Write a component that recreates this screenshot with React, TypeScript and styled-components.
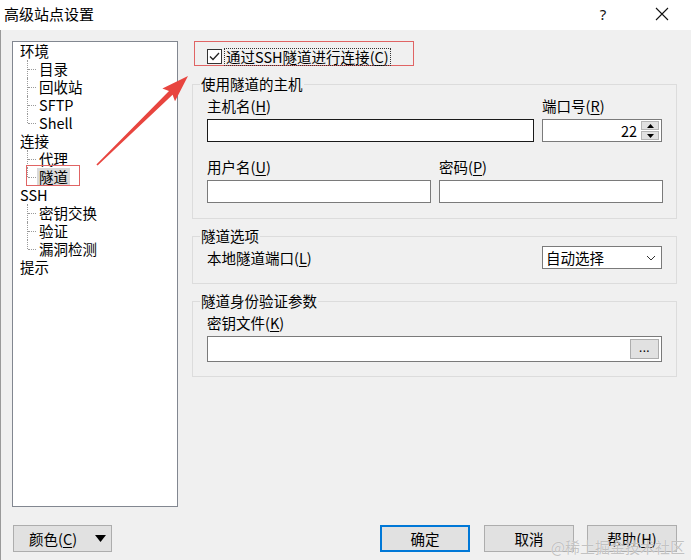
import React from "react";
import styled, { createGlobalStyle } from "styled-components";

const GlobalStyle = createGlobalStyle`
  html, body { margin: 0; padding: 0; background: #f0f0f0; }
  body {
    font-family: "Noto Sans CJK SC", "Noto Sans", sans-serif;
    font-size: 14.5px;
    color: #000;
  }
  * { box-sizing: border-box; }
`;

const Window = styled.div`
  position: relative;
  width: 691px;
  height: 560px;
  background: #f0f0f0;
  display: flex;
  flex-direction: column;
  overflow: hidden;
`;

const TitleBar = styled.div`
  height: 30px;
  background: #fff;
  display: flex;
  align-items: center;
  padding: 0 6px 2px 4px;
`;

const Title = styled.div`
  flex: 1;
  font-size: 15px;
  line-height: 20px;
`;

const TitleButton = styled.div`
  width: 46px;
  height: 28px;
  display: flex;
  align-items: center;
  justify-content: center;
  font-family: "Noto Sans", sans-serif;
  font-size: 15px;
  color: #111;
`;

const Body = styled.div`
  flex: 1;
  display: flex;
  flex-direction: column;
  padding: 11px 14px 0 11px;
  border-left: 1px solid #9a9a9a;
`;

const Main = styled.div`
  display: flex;
  gap: 14px;
  height: 466px;
`;

const Tree = styled.div`
  width: 167px;
  background: #fff;
  border: 1px solid #828790;
`;

const TreeRoot = styled.div`
  line-height: 18px;
  height: 18px;
  padding-left: 7px;
`;

const TreeChild = styled.div<{ $last?: boolean }>`
  position: relative;
  line-height: 18px;
  height: 18px;
  padding-left: 24px;

  &::before {
    content: "";
    position: absolute;
    left: 14px;
    top: 0;
    height: ${(p) => (p.$last ? "9px" : "18px")};
    border-left: 1px dotted #9a9a9a;
  }
  &::after {
    content: "";
    position: absolute;
    left: 15px;
    top: 9px;
    width: 8px;
    border-top: 1px dotted #9a9a9a;
  }
`;

const TreeLabel = styled.span<{ $selected?: boolean }>`
  display: inline-block;
  height: 18px;
  padding: 0 2px;
  background: ${(p) => (p.$selected ? "#d9d9d9" : "transparent")};
`;

const Annotation = styled.div`
  position: absolute;
  left: 13px;
  top: -3px;
  width: 54px;
  height: 21px;
  border: 1.5px solid #e06464;
`;

const RightPane = styled.div`
  width: 485px;
  display: flex;
  flex-direction: column;
`;

const CheckRow = styled.div`
  margin-left: 2px;
  width: 220px;
  height: 25px;
  border: 1.5px solid #e06464;
  display: flex;
  align-items: center;
  padding: 6px 0 0 12px;
  gap: 3px;
`;

const CheckBox = styled.div`
  width: 15px;
  height: 15px;
  border: 1px solid #333;
  background: #fff;
  display: flex;
  align-items: center;
  justify-content: center;
`;

const FocusText = styled.span`
  line-height: 16px;
  outline: 1px dotted #333;
  padding: 0 1px;
`;

const Group = styled.fieldset<{ $gap: number }>`
  margin: ${(p) => p.$gap}px 0 0 0;
  border: 1px solid #dcdcdc;
  padding: 0 14px ${(p) => (p.$gap > 8 ? 15 : 14)}px 14px;
  min-width: 0;
`;

const Legend = styled.legend`
  margin-left: -7px;
  padding: 0 1px;
  line-height: 18px;
`;

const FieldRow = styled.div<{ $cols: string; $top: number }>`
  display: grid;
  grid-template-columns: ${(p) => p.$cols};
  gap: 8px;
  margin-top: ${(p) => p.$top}px;
`;

const Field = styled.div`
  display: flex;
  flex-direction: column;
  gap: 4px;
`;

const Label = styled.div`
  line-height: 18px;
  height: 18px;
`;

const Key = styled.span`
  text-decoration: underline;
  text-underline-offset: 2px;
`;

const Input = styled.div<{ $dark?: boolean; $h?: number }>`
  height: ${(p) => p.$h ?? 23}px;
  background: #fff;
  border: 1px solid ${(p) => (p.$dark ? "#1a1a1a" : "#7a7a7a")};
  display: flex;
  align-items: center;
  justify-content: flex-end;
`;

const SpinValue = styled.span`
  line-height: 18px;
  margin-right: 4px;
`;

const Spin = styled.div`
  width: 18px;
  height: 19px;
  margin-right: 2px;
  display: flex;
  flex-direction: column;
  gap: 1px;
`;

const SpinBtn = styled.div`
  flex: 1;
  background: #e1e1e1;
  border: 1px solid #b5b5b5;
  display: flex;
  align-items: center;
  justify-content: center;
`;

const OptionRow = styled.div`
  display: flex;
  justify-content: space-between;
  align-items: center;
  margin-top: 1px;
`;

const Select = styled.div`
  width: 120px;
  height: 23px;
  background: #fff;
  border: 1px solid #7a7a7a;
  display: flex;
  align-items: center;
  justify-content: space-between;
  padding: 0 5px 0 3px;
  line-height: 18px;
`;

const BrowseButton = styled.div`
  width: 29px;
  height: 20px;
  margin-right: 2px;
  background: #e1e1e1;
  border: 1px solid #adadad;
  display: flex;
  align-items: center;
  justify-content: center;
  font-family: "Noto Sans", sans-serif;
  font-size: 12px;
  letter-spacing: 0.5px;
  padding-bottom: 3px;
`;

const Footer = styled.div`
  display: flex;
  align-items: center;
  margin-top: 18px;
  height: 27px;
`;

const Button = styled.div<{ $primary?: boolean; $w?: number }>`
  width: ${(p) => p.$w ?? 90}px;
  height: 27px;
  background: #e1e1e1;
  border: ${(p) => (p.$primary ? "2px solid #0078d7" : "1px solid #adadad")};
  display: flex;
  align-items: center;
  justify-content: center;
  line-height: 18px;
`;

const ColorButton = styled(Button)`
  margin-left: 1px;
  margin-right: auto;
  justify-content: space-between;
  padding: 0 5px 0 15px;
`;

const Spacer = styled.div<{ $w: number }>`
  width: ${(p) => p.$w}px;
`;

const Watermark = styled.div`
  position: absolute;
  right: 6px;
  bottom: 3px;
  font-size: 15px;
  line-height: 20px;
  color: rgba(175, 175, 175, 0.75);
  text-shadow: 0 0 1px #fff;
  pointer-events: none;
`;

const ArrowLayer = styled.svg`
  position: absolute;
  left: 90px;
  top: 70px;
  width: 105px;
  height: 100px;
  pointer-events: none;
`;

type Node = { label: string; children?: string[] };

const tree: Node[] = [
  { label: "环境", children: ["目录", "回收站", "SFTP", "Shell"] },
  { label: "连接", children: ["代理", "隧道"] },
  { label: "SSH", children: ["密钥交换", "验证", "漏洞检测"] },
  { label: "提示" },
];

function Mnemonic({ text, k }: { text: string; k: string }) {
  return (
    <>
      {text}(<Key>{k}</Key>)
    </>
  );
}

function Chevron() {
  return (
    <svg width="10" height="6" viewBox="0 0 10 6">
      <polyline points="1,1 5,5 9,1" fill="none" stroke="#333" strokeWidth="1" />
    </svg>
  );
}

function Triangle({ up, size = 7 }: { up?: boolean; size?: number }) {
  const h = Math.round(size * 0.6);
  return (
    <svg width={size} height={h} viewBox={`0 0 ${size} ${h}`}>
      <polygon
        points={up ? `0,${h} ${size / 2},0 ${size},${h}` : `0,0 ${size / 2},${h} ${size},0`}
        fill="#000"
      />
    </svg>
  );
}

export default function App() {
  return (
    <Window>
      <GlobalStyle />
      <TitleBar>
        <Title>高级站点设置</Title>
        <TitleButton>?</TitleButton>
        <Spacer $w={13} />
        <TitleButton>
          <svg width="14" height="14" viewBox="0 0 14 14">
            <path d="M1 1 L13 13 M13 1 L1 13" stroke="#111" strokeWidth="1.1" />
          </svg>
        </TitleButton>
      </TitleBar>

      <Body>
        <Main>
          <Tree>
            {tree.map((node) => (
              <React.Fragment key={node.label}>
                <TreeRoot>{node.label}</TreeRoot>
                {node.children?.map((c, i) => (
                  <TreeChild key={c} $last={i === node.children!.length - 1}>
                    <TreeLabel $selected={c === "隧道"}>{c}</TreeLabel>
                    {c === "隧道" && <Annotation />}
                  </TreeChild>
                ))}
              </React.Fragment>
            ))}
          </Tree>

          <RightPane>
            <CheckRow>
              <CheckBox>
                <svg width="11" height="9" viewBox="0 0 11 9">
                  <polyline points="1,4.5 4,7.5 10,1" fill="none" stroke="#222" strokeWidth="1.3" />
                </svg>
              </CheckBox>
              <FocusText>
                <Mnemonic text="通过SSH隧道进行连接" k="C" />
              </FocusText>
            </CheckRow>

            <Group $gap={9}>
              <Legend>使用隧道的主机</Legend>
              <FieldRow $cols="327px 120px" $top={4}>
                <Field>
                  <Label>
                    <Mnemonic text="主机名" k="H" />
                  </Label>
                  <Input $dark />
                </Field>
                <Field>
                  <Label>
                    <Mnemonic text="端口号" k="R" />
                  </Label>
                  <Input>
                    <SpinValue>22</SpinValue>
                    <Spin>
                      <SpinBtn>
                        <Triangle up />
                      </SpinBtn>
                      <SpinBtn>
                        <Triangle />
                      </SpinBtn>
                    </Spin>
                  </Input>
                </Field>
              </FieldRow>
              <FieldRow $cols="224px 224px" $top={16}>
                <Field>
                  <Label>
                    <Mnemonic text="用户名" k="U" />
                  </Label>
                  <Input />
                </Field>
                <Field>
                  <Label>
                    <Mnemonic text="密码" k="P" />
                  </Label>
                  <Input />
                </Field>
              </FieldRow>
            </Group>

            <Group $gap={8}>
              <Legend>隧道选项</Legend>
              <OptionRow>
                <Label>
                  <Mnemonic text="本地隧道端口" k="L" />
                </Label>
                <Select>
                  <span>自动选择</span>
                  <Chevron />
                </Select>
              </OptionRow>
            </Group>

            <Group $gap={8}>
              <Legend>隧道身份验证参数</Legend>
              <FieldRow $cols="1fr" $top={4}>
                <Field>
                  <Label>
                    <Mnemonic text="密钥文件" k="K" />
                  </Label>
                  <Input $h={26}>
                    <BrowseButton>...</BrowseButton>
                  </Input>
                </Field>
              </FieldRow>
            </Group>
          </RightPane>
        </Main>

        <Footer>
          <ColorButton $w={99}>
            <span>
              <Mnemonic text="颜色" k="C" />
            </span>
            <Triangle size={11} />
          </ColorButton>
          <Button $primary>确定</Button>
          <Spacer $w={14} />
          <Button>取消</Button>
          <Spacer $w={13} />
          <Button>
            <Mnemonic text="帮助" k="H" />
          </Button>
        </Footer>
      </Body>

      <ArrowLayer viewBox="0 0 105 100">
        <polygon
          points="6.4,94.4 79,20.9 72.4,18.5 98,6 85,31.3 82.6,24.7 7.6,95.6"
          fill="#e8453f"
        />
      </ArrowLayer>

      <Watermark>@稀土掘金技术社区</Watermark>
    </Window>
  );
}
